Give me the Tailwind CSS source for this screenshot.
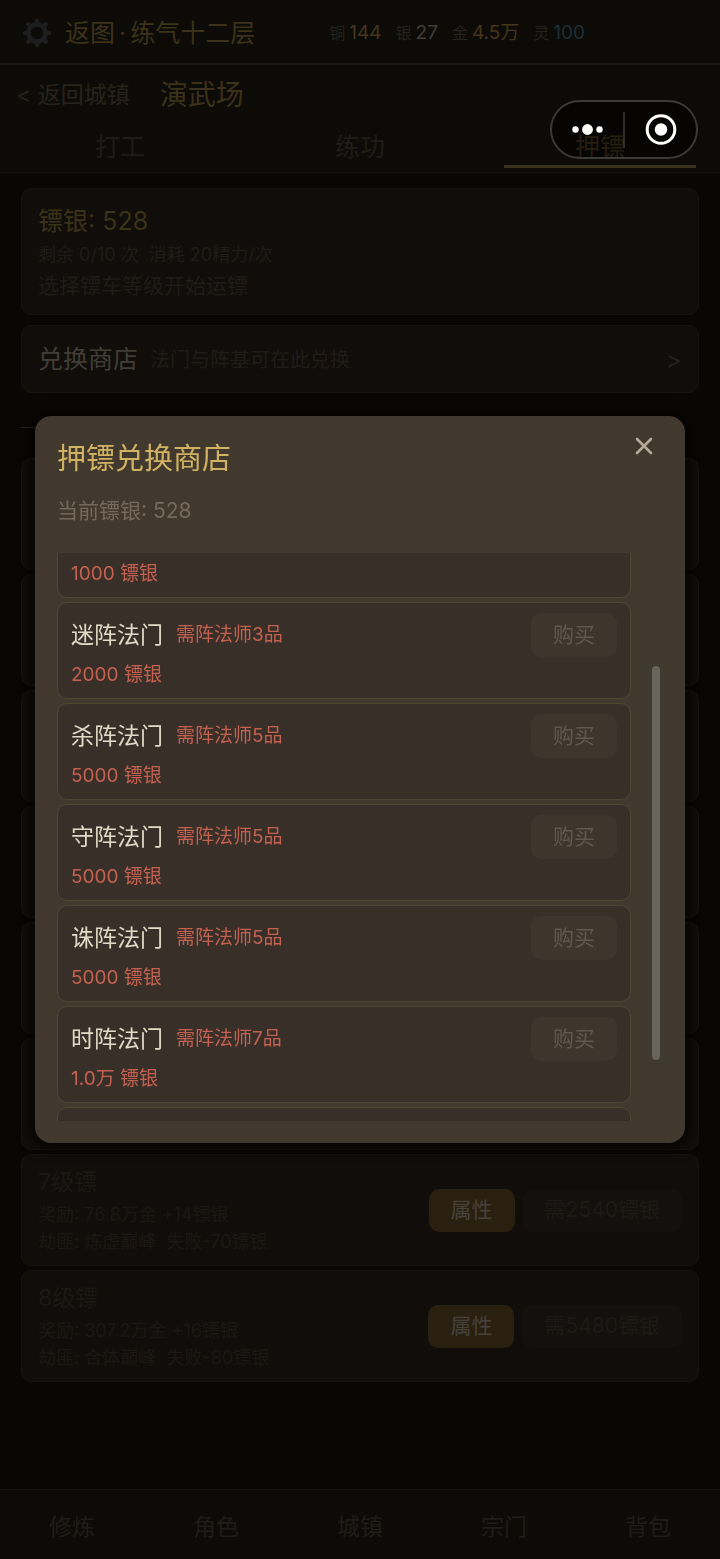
<!DOCTYPE html>
<html lang="zh-CN">
<head>
    <meta charset="UTF-8">
    <meta name="viewport" content="width=device-width, initial-scale=1.0">
    <title>演武场</title>
    <script src="https://cdn.jsdelivr.net/npm/@tailwindcss/browser@4"></script>
</head>
<body class="bg-[#080705] font-['Inter','Noto_Sans_CJK_SC',sans-serif] min-h-screen flex flex-col">
    <!-- Status bar -->
    <header class="flex items-center h-[65px] pl-[21px] pt-[2px] bg-[#0c0b07] border-b-2 border-[#1b1915]">
        <svg class="size-8 text-[#1c1e20]" viewBox="0 0 32 32" fill="none" stroke="currentColor">
            <circle cx="16" cy="16" r="8.500" stroke-width="4.600"/>
            <g stroke-width="4.200" stroke-linecap="round">
                <path d="M16 3.700v3M16 25.300v3M3.700 16h3M25.300 16h3"/>
                <path d="M7.200 7.200l2.200 2.200M22.600 22.600l2.200 2.200M7.200 24.800l2.200-2.200M22.600 9.400l2.200-2.200"/>
            </g>
        </svg>
        <h1 class="ml-3 text-[25px] leading-8 text-[#3b3219]">返图<span class="mx-1">·</span>练气十二层</h1>
        <div class="ml-[74px] flex gap-[14px] text-[19px] leading-8">
            <div class="flex items-center gap-1"><span class="text-base text-[#24221e]">铜</span><span class="text-[#43361d]">144</span></div>
            <div class="flex items-center gap-1"><span class="text-base text-[#24221e]">银</span><span class="text-[#403e39]">27</span></div>
            <div class="flex items-center gap-1"><span class="text-base text-[#24221e]">金</span><span class="text-[#46351a]">4.5万</span></div>
            <div class="flex items-center gap-1"><span class="text-base text-[#24221e]">灵</span><span class="text-[#1e2e37]">100</span></div>
        </div>
    </header>

    <!-- Page title and tabs -->
    <div class="bg-[#0c0b07] border-b border-[#14120e]">
        <div class="flex items-center pt-[10px] pl-4">
            <a href="#" class="text-[23px] leading-10 text-[#27221a]">&lt; 返回城镇</a>
            <h2 class="ml-[30px] text-[28px] leading-10 text-[#3b3219]">演武场</h2>
        </div>
        <nav class="grid grid-cols-3 text-center text-[25px] leading-[44px] pt-[10px]">
            <a href="#" class="text-[#1f1d19]">打工</a>
            <a href="#" class="text-[#1f1d19]">练功</a>
            <a href="#" class="text-[#4a3b1a] mx-6 border-b-3 border-[#38311c] h-[43px] mb-1">押镖</a>
        </nav>
    </div>

    <main class="px-[21px] pt-[15px] pb-4 flex flex-col">
        <section class="rounded-[10px] border border-[#171410] bg-[#100d0a] px-4 pt-[14px] pb-[13px]">
            <h3 class="text-[25px] leading-9 text-[#3b3219]">镖银: 528</h3>
            <p class="text-lg leading-8 text-[#1f1c18] whitespace-pre">剩余 0/10 次  消耗 20精力/次</p>
            <p class="text-[21px] leading-[30px] text-[#1f1c18]">选择镖车等级开始运镖</p>
        </section>

        <button type="button" class="mt-[10px] h-[68px] rounded-[10px] border border-[#171410] bg-[#100d0a] px-4 pt-[2px] flex items-center text-left">
            <span class="text-[25px] text-[#403d37]">兑换商店</span>
            <span class="ml-3 text-xl text-[#1f1c18]">法门与阵基可在此兑换</span>
            <span class="ml-auto text-2xl text-[#24211d]">&gt;</span>
        </button>

        <div class="mt-[18px] mb-[15px] h-8 flex items-center">
            <span class="w-14 h-px bg-[#2c2514]"></span>
        </div>

        <div id="cartList" class="flex flex-col gap-1"></div>
    </main>

    <!-- Bottom navigation -->
    <nav class="mt-auto h-[70px] bg-[#0c0b07] border-t border-[#13120f] grid grid-cols-5 text-center text-[23px] leading-[75px] text-[#1f1d19]">
        <a href="#">修炼</a>
        <a href="#">角色</a>
        <a href="#">城镇</a>
        <a href="#">宗门</a>
        <a href="#">背包</a>
    </nav>

    <!-- Shop dialog -->
    <div class="fixed inset-0 flex items-center justify-center px-[35px]">
        <div role="dialog" aria-labelledby="shopTitle" class="relative w-full rounded-2xl bg-[#42392e] pl-[22px] pr-[25px] py-[22px] shadow-[0_2px_14px_4px_rgba(0,0,0,0.7)]">
            <h2 id="shopTitle" class="pt-px text-[29px] leading-10 text-[#d0b262]">押镖兑换商店</h2>
            <button type="button" aria-label="关闭" class="absolute top-[10px] right-[21px] size-10 flex items-center justify-center text-[#b5aa98]">
                <svg class="size-5" viewBox="0 0 20 20" fill="none" stroke="currentColor" stroke-width="2.600" stroke-linecap="round"><path d="M3 3l14 14M17 3L3 17"/></svg>
            </button>
            <p class="mt-4 text-[21px] leading-8 text-[#74695a]">当前镖银: 528</p>
            <div class="mt-[26px] flex gap-[21px] h-[568px]">
                <div class="flex-1 overflow-hidden">
                    <div id="shopList" class="-mt-[52px] flex flex-col gap-1"></div>
                </div>
                <div class="w-2 pt-[113px]">
                    <div class="h-[394px] rounded-full bg-[#68635b]"></div>
                </div>
            </div>
        </div>
    </div>

    <!-- Mini program capsule -->
    <div class="fixed top-[100px] right-[22px] w-[148px] h-[59px] rounded-full border-2 border-[#3b3a38] bg-black/50 flex items-center text-white">
        <button type="button" aria-label="更多" class="flex-1 flex justify-center">
            <svg class="w-8 h-3" viewBox="0 0 32 12" fill="currentColor"><circle cx="3.500" cy="5.500" r="3.200"/><circle cx="15.500" cy="5.500" r="5.400"/><circle cx="27.500" cy="5.500" r="3.200"/></svg>
        </button>
        <span class="w-[2px] h-9 bg-[#2f2e2c]"></span>
        <button type="button" aria-label="退出" class="flex-1 flex justify-center">
            <svg class="size-8" viewBox="0 0 32 32"><circle cx="16" cy="15.500" r="13.800" fill="none" stroke="currentColor" stroke-width="3"/><circle cx="16" cy="15.500" r="6.200" fill="currentColor"/></svg>
        </button>
    </div>

    <script>
        // levels without details yet show as empty cards
        var carts = [
            null, null, null, null, null, null,
            ['7级镖', '奖励: 76.8万金 +14镖银', '劫匪: 炼虚巅峰  失败-70镖银', '需2540镖银'],
            ['8级镖', '奖励: 307.2万金 +16镖银', '劫匪: 合体巅峰  失败-80镖银', '需5480镖银']
        ];

        document.getElementById('cartList').innerHTML = carts.map(c => `
            <article class="h-28 rounded-[10px] border border-[#171410] bg-[#100d0a] px-4 flex items-center gap-2">${c ? `
                <div class="flex-1 whitespace-pre text-lg leading-[27px] text-[#1b1814]"><h4 class="text-[23px] leading-8 mb-[3px]">${c[0]}</h4><p>${c[1]}</p><p>${c[2]}</p></div>
                <button type="button" class="h-[43px] px-[22px] rounded-[10px] bg-[#292010] text-[21px] text-[#46423a]">属性</button>
                <button type="button" disabled class="h-[43px] px-[22px] rounded-[10px] bg-[#13100d] text-[21px] text-[#1d1a16]">${c[3]}</button>` : ''}
            </article>`).join('');

        var goods = [
            ['', '', '1000'],
            ['迷阵法门', '需阵法师3品', '2000'],
            ['杀阵法门', '需阵法师5品', '5000'],
            ['守阵法门', '需阵法师5品', '5000'],
            ['诛阵法门', '需阵法师5品', '5000'],
            ['时阵法门', '需阵法师7品', '1.0万'],
            null
        ];

        document.getElementById('shopList').innerHTML = goods.map(g => `
            <article class="shrink-0 h-[97px] rounded-[10px] border border-[#504634] bg-[#382f29] px-[13px] pt-[10px]">${g ? `
                <div class="flex items-center h-11">${g[0] ? `
                    <h3 class="text-[23px] text-[#e2d9c6]">${g[0]}</h3>
                    <span class="ml-[13px] text-[19px] text-[#c4604f]">${g[1]}</span>
                    <button type="button" disabled class="ml-auto h-11 px-[22px] rounded-[10px] bg-[#3e352d] text-[21px] text-[#62584c]">购买</button>` : ''}
                </div>
                <p class="text-[19px] leading-9 text-[#c4604f]">${g[2]} 镖银</p>` : ''}
            </article>`).join('');
    </script>
</body>
</html>
